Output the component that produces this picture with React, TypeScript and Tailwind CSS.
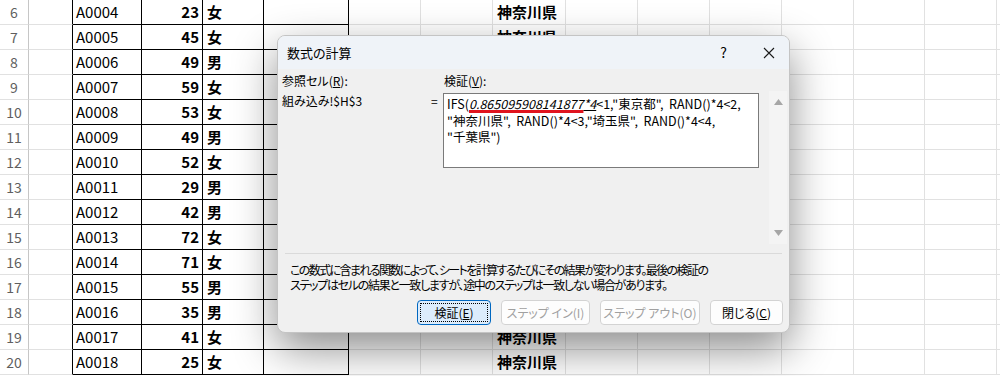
import type { ReactNode } from "react"

const rows: [number, string, number, string][] = [
  [6, "A0004", 23, "女"],
  [7, "A0005", 45, "女"],
  [8, "A0006", 49, "男"],
  [9, "A0007", 59, "女"],
  [10, "A0008", 53, "女"],
  [11, "A0009", 49, "男"],
  [12, "A0010", 52, "女"],
  [13, "A0011", 29, "男"],
  [14, "A0012", 42, "男"],
  [15, "A0013", 72, "女"],
  [16, "A0014", 71, "女"],
  [17, "A0015", 55, "男"],
  [18, "A0016", 35, "男"],
  [19, "A0017", 41, "女"],
  [20, "A0018", 25, "女"],
]

// widths of the plain grid columns right of the table
const gridCols = [72, 72, 73, 72, 72, 72, 72, 71, 72, 3]

const SheetRow = ({ n, id, age, sex }: { n: number; id: string; age: number; sex: string }) => (
  <div className="flex h-[25px] text-[15px] leading-[24px] text-black">
    <div className="w-[29px] shrink-0 border-r border-b border-r-[#c6c6c6] border-b-[#e1e1e1] text-center text-[14px] text-[#5f5f5f]">
      {n}
    </div>
    <div className="w-[44px] shrink-0 border-r border-b border-r-black border-b-[#e1e1e1]" />
    <div className="w-[69px] shrink-0 border-r border-b border-black pl-[3px]">{id}</div>
    <div className="w-[61px] shrink-0 border-r border-b border-black pr-[3px] text-right font-bold">{age}</div>
    <div className="w-[61px] shrink-0 border-r border-b border-black pl-[4px] font-bold">{sex}</div>
    <div className="w-[85px] shrink-0 border-r border-b border-black" />
    {gridCols.map((w, i) => (
      <div
        key={i}
        style={{ width: w }}
        className="shrink-0 border-r border-b border-[#e1e1e1] pl-[4px] font-bold"
      >
        {i === 2 ? "神奈川県" : null}
      </div>
    ))}
  </div>
)

const Button = ({
  children,
  width,
  disabled,
  primary,
}: {
  children: ReactNode
  width: string
  disabled?: boolean
  primary?: boolean
}) => (
  <div
    className={
      primary
        ? `${width} flex h-[25px] items-center justify-center rounded-[4px] border border-[#0067c0] bg-[#dcecfc] p-[2px]`
        : `${width} flex h-[25px] items-center justify-center rounded-[4px] border border-[#d3d3d3] bg-[#fdfdfd]`
    }
  >
    {primary ? (
      <div className="flex h-full w-full items-center justify-center border border-dotted border-black">
        {children}
      </div>
    ) : (
      <span className={disabled ? "text-[#a0a0a0]" : "text-black"}>{children}</span>
    )}
  </div>
)

export default function App() {
  return (
    <div className="relative h-[376px] w-[1000px] overflow-hidden bg-white font-['Noto_Sans_CJK_JP',sans-serif]">
      {/* spreadsheet behind the dialog */}
      <div className="flex flex-col">
        {rows.map(([n, id, age, sex]) => (
          <SheetRow key={n} n={n} id={id} age={age} sex={sex} />
        ))}
      </div>

      {/* 数式の計算 dialog */}
      <div className="absolute left-[277px] top-[35px] flex h-[298px] w-[513px] flex-col overflow-hidden rounded-[8px] border border-[#c4c4c4] bg-[#f0f0f0] text-[12px] text-black shadow-[0_16px_44px_rgba(0,0,0,0.45)] [font-feature-settings:'palt']">
        {/* title bar */}
        <div className="flex h-[33px] shrink-0 items-center bg-[#eff3f8] pl-[9px] pr-[14px]">
          <span className="text-[13px]">数式の計算</span>
          <span className="ml-auto mr-[36px] text-[14px]">?</span>
          <svg width="12" height="12" viewBox="0 0 12 12" className="mt-[1px]">
            <path d="M1 1 L11 11 M11 1 L1 11" stroke="#1a1a1a" strokeWidth="1.1" fill="none" />
          </svg>
        </div>

        {/* labels + formula */}
        <div className="flex h-[184px] shrink-0 pl-[4px]">
          <div className="flex w-[143px] shrink-0 flex-col gap-[4px] pt-[4px] leading-[16px]">
            <span>
              参照セル(<span className="underline">R</span>):
            </span>
            <span>組み込み!$H$3</span>
          </div>
          <div className="w-[18px] shrink-0 pl-[6px] pt-[24px] leading-[16px]">=</div>
          <div className="flex w-[316px] shrink-0 flex-col gap-[4px] pt-[4px]">
            <span className="pl-[1px] leading-[16px]">
              検証(<span className="underline">V</span>):
            </span>
            <div className="h-[75px] border border-[#7a7a7a] bg-white pl-[3px] pt-[2px] text-[12.5px] leading-[16.5px] whitespace-pre [font-feature-settings:normal]">
              <div>
                IFS(
                <span className="italic">
                  <span className="underline decoration-[#e0141e] decoration-[3px] underline-offset-[1px]">
                    0.865095908141877
                  </span>
                  <span className="underline decoration-black underline-offset-[1px]">*4</span>
                </span>
                {"<1,\"東京都\",  RAND()*4<2,"}
              </div>
              <div>{"\"神奈川県\",  RAND()*4<3,\"埼玉県\",  RAND()*4<4,"}</div>
              <div>{"\"千葉県\")"}</div>
            </div>
          </div>
          {/* scrollbar */}
          <div className="ml-[10px] mt-[22px] flex h-[153px] w-[18px] shrink-0 flex-col items-center justify-between bg-[#f4f4f4] py-[8px]">
            <svg width="9" height="6" viewBox="0 0 9 6">
              <path d="M4.5 0 L9 6 L0 6 Z" fill="#a6a6a6" />
            </svg>
            <svg width="9" height="6" viewBox="0 0 9 6">
              <path d="M0 0 L9 0 L4.5 6 Z" fill="#a6a6a6" />
            </svg>
          </div>
        </div>

        <div className="mx-[7px] h-px shrink-0 bg-[#dadada]" />

        <div className="pl-[12px] pt-[8px] leading-[15px]">
          <div className="tracking-[-1.6px]">
            この数式に含まれる関数によって、シートを計算するたびにその結果が変わります。最後の検証の
          </div>
          <div className="tracking-[-1.3px]">
            ステップはセルの結果と一致しますが、途中のステップは一致しない場合があります。
          </div>
        </div>

        <div className="mt-[8px] flex justify-end gap-[10px] pr-[6px]">
          <Button width="w-[74px]" primary>
            検証(<span className="underline">E</span>)
          </Button>
          <Button width="w-[89px]" disabled>
            ステップ イン(I)
          </Button>
          <Button width="w-[100px]" disabled>
            ステップ アウト(O)
          </Button>
          <Button width="w-[73px]">
            閉じる(<span className="underline">C</span>)
          </Button>
        </div>
      </div>
    </div>
  )
}
